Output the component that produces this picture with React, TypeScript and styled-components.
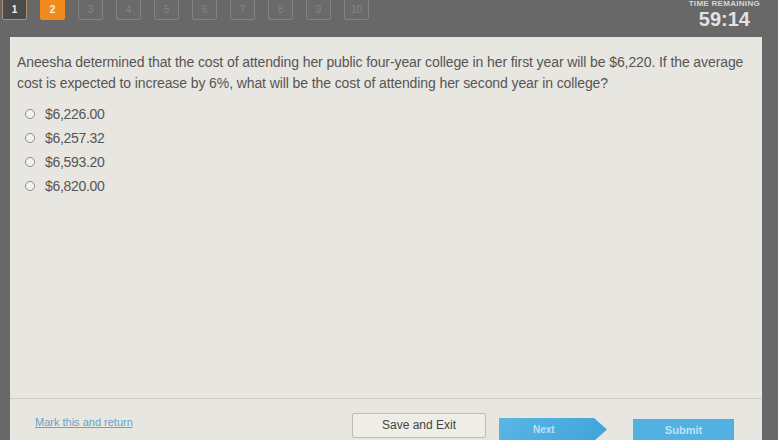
import React from "react";
import styled, { createGlobalStyle } from "styled-components";

const GlobalStyle = createGlobalStyle`
  html, body {
    margin: 0;
    padding: 0;
    background: #686868;
    font-family: "Liberation Sans", Arial, sans-serif;
  }
`;

const Page = styled.div`
  width: 778px;
  height: 440px;
  overflow: hidden;
  background: #686868;
  display: flex;
  flex-direction: column;
`;

const Header = styled.div`
  height: 37px;
  flex: none;
  display: flex;
  justify-content: space-between;
  align-items: flex-start;
  padding: 0 18px 0 2px;
`;

const Tiles = styled.div`
  display: flex;
  gap: 13px;
  margin-top: -3px;
`;

const Tile = styled.div<{ $state: "done" | "current" | "todo" }>`
  width: 25px;
  height: 23px;
  box-sizing: border-box;
  border-radius: 2px;
  display: flex;
  align-items: center;
  justify-content: center;
  padding-top: 2px;
  font-size: 10px;
  font-weight: ${(p) => (p.$state === "todo" ? "normal" : "bold")};
  color: ${(p) => (p.$state === "todo" ? "#858585" : "#f4f1ea")};
  background: ${(p) =>
    p.$state === "current" ? "#f28b1e" : p.$state === "done" ? "#4b4b4b" : "#6a6a6a"};
  border: 1px solid
    ${(p) =>
      p.$state === "current" ? "#f28b1e" : p.$state === "done" ? "#b39068" : "#838383"};
`;

const Timer = styled.div`
  display: flex;
  flex-direction: column;
  align-items: center;
  margin-top: 0;
`;

const TimerLabel = styled.div`
  font-size: 8px;
  line-height: 8px;
  font-weight: bold;
  letter-spacing: 0.3px;
  color: #d6d6d6;
  text-transform: uppercase;
`;

const TimerValue = styled.div`
  font-size: 20px;
  line-height: 22px;
  font-weight: bold;
  color: #e2e2e2;
`;

const Panel = styled.div`
  flex: 1;
  margin: 0 16px 0 10px;
  background: #e8e6e0;
  display: flex;
  flex-direction: column;
`;

const Content = styled.div`
  flex: 1;
  padding: 15px 8px 0 7px;
`;

const Question = styled.p`
  margin: 0 0 11px;
  font-size: 14px;
  line-height: 21px;
  color: #555;
  letter-spacing: -0.1px;
`;

const Options = styled.div`
  display: flex;
  flex-direction: column;
  gap: 6px;
  padding-left: 8px;
`;

const Option = styled.label`
  display: flex;
  align-items: center;
  gap: 10px;
  height: 18px;
  font-size: 14px;
  color: #555;
  letter-spacing: -0.3px;
`;

const Radio = styled.span`
  width: 8px;
  height: 8px;
  border-radius: 50%;
  border: 1px solid #8a8a8a;
  background: #f3f2ee;
`;

const Footer = styled.div`
  height: 41px;
  flex: none;
  border-top: 1px solid #cfcdc7;
  display: flex;
  align-items: center;
  padding: 0 0 0 25px;
`;

const MarkLink = styled.a`
  font-size: 11px;
  color: #6aa3c8;
  text-decoration: underline;
  width: 317px;
  margin-top: 4px;
`;

const SaveButton = styled.button`
  width: 134px;
  height: 25px;
  margin-top: 11px;
  border: 1px solid #bdbcb6;
  border-radius: 2px;
  background: #eeede8;
  font-family: inherit;
  font-size: 12px;
  color: #444;
`;

const NextButton = styled.div`
  width: 108px;
  height: 23px;
  margin: 20px 0 0 13px;
  background: linear-gradient(135deg, #5ab6e4, #3fa4da);
  clip-path: polygon(0 0, 88% 0, 100% 50%, 88% 100%, 0 100%);
  display: flex;
  align-items: center;
  padding-left: 34px;
  box-sizing: border-box;
  font-size: 10px;
  font-weight: bold;
  color: #bfe2f4;
`;

const SubmitButton = styled.div`
  width: 101px;
  height: 22px;
  margin: 20px 0 0 26px;
  background: #53b1e2;
  display: flex;
  align-items: center;
  justify-content: center;
  font-size: 11px;
  font-weight: bold;
  color: #bfe2f4;
`;

const answers = ["$6,226.00", "$6,257.32", "$6,593.20", "$6,820.00"];

export default function App() {
  return (
    <Page>
      <GlobalStyle />
      <Header>
        <Tiles>
          {Array.from({ length: 10 }, (_, i) => (
            <Tile key={i} $state={i === 0 ? "done" : i === 1 ? "current" : "todo"}>
              {i + 1}
            </Tile>
          ))}
        </Tiles>
        <Timer>
          <TimerLabel>Time Remaining</TimerLabel>
          <TimerValue>59:14</TimerValue>
        </Timer>
      </Header>
      <Panel>
        <Content>
          <Question>
            Aneesha determined that the cost of attending her public four-year college in her
            first year will be $6,220. If the average cost is expected to increase by 6%, what
            will be the cost of attending her second year in college?
          </Question>
          <Options>
            {answers.map((a) => (
              <Option key={a}>
                <Radio />
                {a}
              </Option>
            ))}
          </Options>
        </Content>
        <Footer>
          <MarkLink>Mark this and return</MarkLink>
          <SaveButton>Save and Exit</SaveButton>
          <NextButton>Next</NextButton>
          <SubmitButton>Submit</SubmitButton>
        </Footer>
      </Panel>
    </Page>
  );
}
